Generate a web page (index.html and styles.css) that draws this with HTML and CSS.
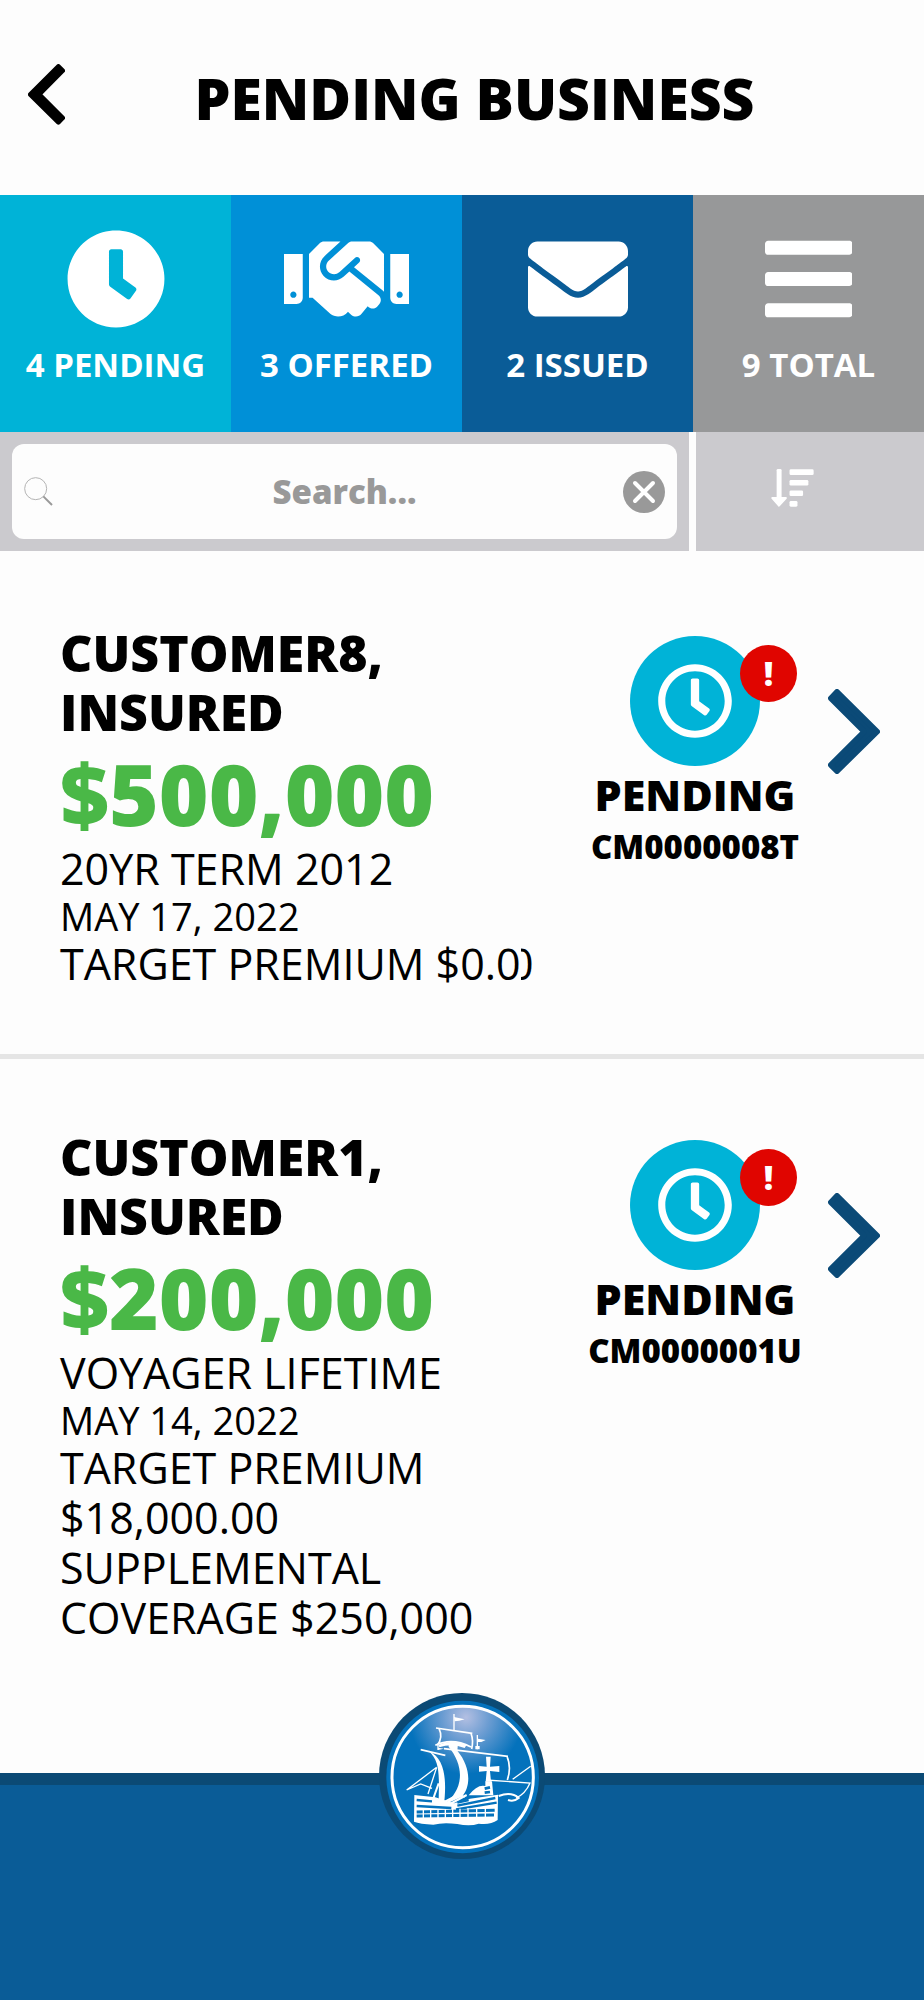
FILE: index.html
```html
<!DOCTYPE html>
<html lang="en">
<head>
<meta charset="utf-8">
<meta name="viewport" content="width=device-width, initial-scale=1">
<title>Pending Business</title>
<link rel="stylesheet" href="styles.css">
</head>
<body>
<svg class="defs" aria-hidden="true">
  <symbol id="clock-outline" viewBox="0 0 512 512"><path d="M256 8C119 8 8 119 8 256s111 248 248 248 248-111 248-248S393 8 256 8zm0 448c-110.500 0-200-89.500-200-200S145.500 56 256 56s200 89.500 200 200-89.500 200-200 200zm61.800-104.400l-84.900-61.700c-3.100-2.300-4.900-5.900-4.900-9.700V116c0-6.600 5.400-12 12-12h32c6.600 0 12 5.400 12 12v141.700l66.800 48.600c5.400 3.900 6.500 11.400 2.600 16.800L334.600 349c-3.900 5.300-11.400 6.500-16.800 2.600z"/></symbol>
  <symbol id="chevron" viewBox="804 236 156 255"><path d="M831 244L952 364L831 483L812 464L912 364L812 264Z" stroke="currentColor" stroke-width="16" stroke-linejoin="round"/></symbol>
</svg>

<header class="header">
  <button class="back" aria-label="Back">
    <svg class="back-icon" viewBox="82 76 112 184"><path d="M174 83L89 168L174 252L187 239L116 168L187 96Z" stroke="currentColor" stroke-width="14" stroke-linejoin="round"/></svg>
  </button>
  <h1 class="title">PENDING BUSINESS</h1>
</header>

<nav class="tabs">
  <button class="tab tab-pending">
    <svg class="tab-icon" viewBox="0 0 512 512"><path d="M256 8C119 8 8 119 8 256s111 248 248 248 248-111 248-248S393 8 256 8zm57.100 350.100L224.900 294c-3.100-2.300-4.900-5.900-4.900-9.700V116c0-6.600 5.400-12 12-12h48c6.600 0 12 5.400 12 12v137.700l63.500 46.200c5.400 3.900 6.500 11.400 2.600 16.800l-28.200 38.800c-3.900 5.300-11.400 6.500-16.800 2.600z"/></svg>
    <span>4 PENDING</span>
  </button>
  <button class="tab tab-offered">
    <svg class="tab-icon" viewBox="0 0 640 512"><path d="M434.700 64h-85.900c-8 0-15.700 3-21.600 8.400l-98.300 90c-.1.1-.2.3-.3.4-16.600 15.600-16.300 40.500-2.100 56 12.700 13.900 39.400 17.600 56.100 2.700.1-.1.3-.1.4-.2l79.900-73.200c6.500-5.900 16.700-5.500 22.600 1 6 6.500 5.500 16.600-1 22.600l-26.100 23.900L504 313.800c2.900 2.400 5.500 5 7.900 7.700V128l-54.600-54.600c-5.900-6-14.100-9.400-22.600-9.400zM544 128.200v223.900c0 17.700 14.300 32 32 32h64V128.200h-96zm48 223.900c-8.800 0-16-7.200-16-16s7.200-16 16-16 16 7.200 16 16-7.200 16-16 16zM0 384h64c17.700 0 32-14.300 32-32V128.200H0V384zm48-63.900c8.800 0 16 7.200 16 16s-7.200 16-16 16-16-7.200-16-16c0-8.900 7.200-16 16-16zm435.900 18.600L334.600 217.500l-30 27.500c-29.700 27.100-75.200 24.500-101.700-4.400-26.900-29.400-24.800-74.900 4.400-101.700L289.100 64h-83.800c-8.500 0-16.600 3.400-22.600 9.400L128 128v223.900h18.300l90.500 81.900c27.400 22.300 67.700 18.100 90-9.300l.2-.2 17.900 15.500c15.900 13 39.400 10.500 52.300-5.400l31.400-38.600 5.400 4.400c13.700 11.100 33.900 9.100 45-4.700l9.500-11.700c11.200-13.800 9.100-33.900-4.600-45.100z"/></svg>
    <span>3 OFFERED</span>
  </button>
  <button class="tab tab-issued">
    <svg class="tab-icon" viewBox="0 0 512 512"><path d="M502.300 190.800c3.900-3.100 9.700-.2 9.700 4.700V400c0 26.500-21.500 48-48 48H48c-26.500 0-48-21.500-48-48V195.600c0-5 5.700-7.800 9.700-4.700 22.400 17.400 52.100 39.500 154.100 113.600 21.100 15.400 56.700 47.800 92.200 47.600 35.700.3 72-32.800 92.300-47.600 102-74.100 131.600-96.300 154-113.700zM256 320c23.200.4 56.600-29.200 73.400-41.400 132.700-96.300 142.800-104.700 173.400-128.700 5.800-4.500 9.200-11.500 9.200-18.900v-19c0-26.500-21.500-48-48-48H48c-26.500 0-48 21.500-48 48v19c0 7.400 3.400 14.300 9.200 18.900 30.600 23.900 40.700 32.400 173.400 128.700 16.800 12.200 50.200 41.800 73.400 41.400z"/></svg>
    <span>2 ISSUED</span>
  </button>
  <button class="tab tab-total">
    <svg class="tab-icon" viewBox="0 0 448 512"><path d="M16 132h416c8.800 0 16-7.200 16-16V76c0-8.800-7.200-16-16-16H16C7.200 60 0 67.200 0 76v40c0 8.800 7.200 16 16 16zm0 160h416c8.800 0 16-7.200 16-16v-40c0-8.800-7.200-16-16-16H16c-8.800 0-16 7.200-16 16v40c0 8.800 7.200 16 16 16zm0 160h416c8.800 0 16-7.200 16-16v-40c0-8.800-7.200-16-16-16H16c-8.800 0-16 7.200-16 16v40c0 8.800 7.200 16 16 16z"/></svg>
    <span>9 TOTAL</span>
  </button>
</nav>

<div class="tools">
  <form class="search" role="search">
    <div class="search-box">
      <svg class="search-icon outline" viewBox="70 140 87 87" stroke="#999"><circle cx="105" cy="175" r="33" stroke="#b4b4b4" stroke-width="3"/><path d="M128 198L154 224" stroke-width="6"/></svg>
      <input class="search-input" type="text" placeholder="Search..." aria-label="Search">
      <button class="clear" type="reset" aria-label="Clear search">
        <svg viewBox="0 0 42 42"><circle cx="21" cy="21" r="21" fill="#999"/><path d="M12 12L30 30M30 12L12 30" stroke="#fff" stroke-width="4" stroke-linecap="round"/></svg>
      </button>
    </div>
  </form>
  <button class="sort" aria-label="Sort">
    <svg class="sort-icon" viewBox="926 114 130 115"><rect x="943" y="114" width="15" height="92" rx="4"/><path d="M930 202H971L950 225Z" stroke="#fff" stroke-width="6" stroke-linejoin="round"/><rect x="982" y="115" width="73" height="17" rx="4"/><rect x="982" y="147" width="57" height="17" rx="4"/><rect x="982" y="179" width="41" height="17" rx="4"/><rect x="982" y="211" width="24" height="17" rx="4"/></svg>
  </button>
</div>

<main class="list">
  <article class="card">
    <div class="details">
      <h2 class="name">CUSTOMER8, INSURED</h2>
      <p class="amount">$500,000</p>
      <p class="line">20YR TERM 2012</p>
      <p class="date">MAY 17, 2022</p>
      <p class="line">TARGET PREMIUM $0.0<span class="cut">0</span></p>
    </div>
    <div class="status">
      <div class="disc"><svg class="disc-icon"><use href="#clock-outline"/></svg><span class="badge">!</span></div>
      <p class="state">PENDING</p>
      <p class="policy">CM0000008T</p>
    </div>
    <button class="open" aria-label="Open CUSTOMER8"><svg class="open-icon"><use href="#chevron"/></svg></button>
  </article>
  <article class="card">
    <div class="details">
      <h2 class="name">CUSTOMER1, INSURED</h2>
      <p class="amount">$200,000</p>
      <p class="line">VOYAGER LIFETIME</p>
      <p class="date">MAY 14, 2022</p>
      <p class="line">TARGET PREMIUM $18,000.00</p>
      <p class="line">SUPPLEMENTAL COVERAGE $250,000</p>
    </div>
    <div class="status">
      <div class="disc"><svg class="disc-icon"><use href="#clock-outline"/></svg><span class="badge">!</span></div>
      <p class="state">PENDING</p>
      <p class="policy">CM0000001U</p>
    </div>
    <button class="open" aria-label="Open CUSTOMER1"><svg class="open-icon"><use href="#chevron"/></svg></button>
  </article>
</main>

<footer class="footer">
  <button class="logo" aria-label="Home">
    <svg class="outline" viewBox="27 39 498 498" stroke="#fff">
      <defs><radialGradient id="glow" gradientUnits="userSpaceOnUse" cx="288" cy="112" r="170"><stop offset="0" stop-color="#b3bfe2"/><stop offset=".4" stop-color="#6d9dd2"/><stop offset="1" stop-color="#0472bc"/></radialGradient></defs>
      <g stroke="none">
        <circle cx="276" cy="288" r="249" fill="#0b4a75"/>
        <circle cx="278" cy="291" r="229" fill="#0472bc"/>
      </g>
      <circle cx="278" cy="291" r="212" fill="url(#glow)" stroke-width="9"/>
      <g stroke-width="5">
        <path d="M252 102V150M322 165V208M204 190V210" stroke-width="4"/>
        <path d="M198 144L307 160M207 146Q220 172 202 196M303 160Q311 182 305 207M196 196Q246 172 303 201"/>
        <path d="M152 209L226 226M222 206L414 229M411 229Q425 262 412 300"/>
        <path d="M110 330L200 262M110 330L152 312L186 325M200 262L174 342" stroke-width="4"/>
        <path d="M348 300L480 309Q466 342 438 354M428 298L482 259" stroke-width="4"/>
        <path d="M386 348Q424 334 446 354Q432 366 414 360" stroke-width="6"/>
        <path d="M190 355L206 310M212 372L262 345L285 350M240 372L290 345" stroke-width="6"/>
      </g>
      <g fill="#fff" stroke="none">
        <path d="M252 111L284 118L268 122L254 124ZM324 176L347 180L334 186L324 186ZM204 203L222 206L204 210ZM316 198h13v10h-13Z"/>
        <path d="M206 194Q246 176 290 194L284 204Q246 188 208 202Z"/>
        <path d="M176 214C214 244 206 300 206 374L222 374C228 320 232 236 176 214Z"/>
        <path d="M236 188L264 190L262 212C302 260 304 318 276 350L222 374C280 330 286 262 236 200Z"/>
        <path d="M348 230h14l-2 30 28-2v18l-28-3 3 32h-16l3-32-23 2v-17l23 2Z"/>
        <path d="M296 346Q322 312 346 318V304H366L370 346Z"/>
        <path d="M133 345L196 352L252 370L300 356L384 344L383 420Q360 436 326 431Q300 440 262 432Q220 426 190 434Q150 432 132 425Z"/>
      </g>
      <g stroke="#0472bc" stroke-width="8">
        <path d="M140 360L186 364M140 378L244 384M262 377L376 354M258 388L380 368M262 368L296 360" stroke-width="7"/>
        <path d="M140 396L374 391M140 408L372 405" stroke-width="9"/>
        <path d="M344 326L360 322M344 338L360 336"/>
      </g>
      <path d="M160 388V414M182 388V414M204 388V414M226 388V414M248 386V414M270 386V414M294 384V414M320 384V414M346 384V412" stroke-width="4"/>
    </svg>
  </button>
</footer>
</body>
</html>
```
FILE: styles.css
```css
* { box-sizing: border-box; }

body {
  margin: 0;
  min-height: 100vh;
  display: flex;
  flex-direction: column;
  background: #fdfdfd;
  color: #000;
  font-family: "Open Sans", "Noto Sans", sans-serif;
}

h1, h2, p { margin: 0; }
svg { display: block; fill: currentColor; }
.outline { fill: none; }
button { border: 0; padding: 0; background: none; color: inherit; font: inherit; }
.defs { position: absolute; width: 0; height: 0; }

.header {
  display: flex;
  align-items: flex-start;
  padding: 64px 40px 63px 28px;
}
.back-icon { width: 37px; height: 61px; }
.title {
  flex: 1;
  text-align: center;
  font-size: 57px;
  line-height: 68px;
  font-weight: 800;
}

.tabs { display: grid; grid-template-columns: repeat(4, 1fr); }
.tab {
  display: flex;
  flex-direction: column;
  align-items: center;
  gap: 16px;
  padding: 34px 0 47px;
  color: #fff;
  font-size: 33px;
  line-height: 40px;
  font-weight: 700;
}
.tab-icon { height: 100px; }
.tab-pending { background: #00b3d7; }
.tab-offered { background: #0090d7; }
.tab-issued { background: #0a5c97; }
.tab-total { background: #979899; }

.tools { display: grid; grid-template-columns: 3fr 1fr; }
.search {
  background: #cbcace;
  padding: 12px;
  margin-right: 4px;
}
.search-box {
  display: grid;
  grid-template-columns: 42px 1fr 42px;
  align-items: center;
  padding: 0 12px;
  height: 95px;
  border-radius: 12px;
  background: #fdfdfd;
}
.search-icon { width: 29px; height: 29px; }
.search-input {
  width: 100%;
  min-width: 0;
  border: 0;
  padding: 0;
  outline: 0;
  background: none;
  text-align: center;
  font: 800 33px/44px "Open Sans", "Noto Sans", sans-serif;
}
.search-input::placeholder { color: #999; opacity: 1; }
.clear svg { width: 42px; height: 42px; }
.sort {
  display: flex;
  align-items: center;
  justify-content: center;
  margin-left: 3px;
  padding: 0 36px 8px 0;
  background: #cbcace;
  color: #fff;
}
.sort-icon { width: 43px; height: 38px; }

.list { flex: 1; }
.card {
  display: grid;
  grid-template-columns: 1fr 230px 52px;
  gap: 18px;
  align-items: start;
  padding: 73px 44px 65px 60px;
}
.card + .card { border-top: 5px solid #e5e5e5; padding-top: 69px; }
.name { font-size: 50px; line-height: 59px; font-weight: 800; }
.amount { font-size: 85px; line-height: 102px; font-weight: 800; color: #4ab847; }
.line { font-size: 43px; line-height: 50px; }
.date { font-size: 38px; line-height: 45px; }
.cut {
  display: inline-flex;
  justify-content: flex-end;
  width: 13px;
  overflow: hidden;
  vertical-align: bottom;
}

.status {
  display: flex;
  flex-direction: column;
  align-items: center;
  padding-top: 12px;
}
.disc {
  position: relative;
  display: grid;
  place-items: center;
  width: 130px;
  height: 130px;
  margin-bottom: 4px;
  border-radius: 50%;
  background: #00b3d7;
  color: #fff;
}
.disc-icon { width: 76px; height: 76px; }
.badge {
  position: absolute;
  top: 9px;
  right: -37px;
  width: 57px;
  height: 57px;
  border-radius: 50%;
  background: #e00500;
  text-align: center;
  font-size: 33px;
  line-height: 57px;
  font-weight: 800;
}
.state { font-size: 43px; line-height: 50px; font-weight: 800; }
.policy { font-size: 33px; line-height: 53px; font-weight: 800; }
.open { margin-top: 65px; color: #0b4a77; }
.open-icon { width: 52px; height: 85px; }

.footer {
  position: relative;
  height: 227px;
  border-top: 12px solid #0b4a75;
  background: #0a5c97;
}
.logo {
  position: absolute;
  top: -92px;
  left: 50%;
  width: 166px;
  margin-left: -83px;
}
```
